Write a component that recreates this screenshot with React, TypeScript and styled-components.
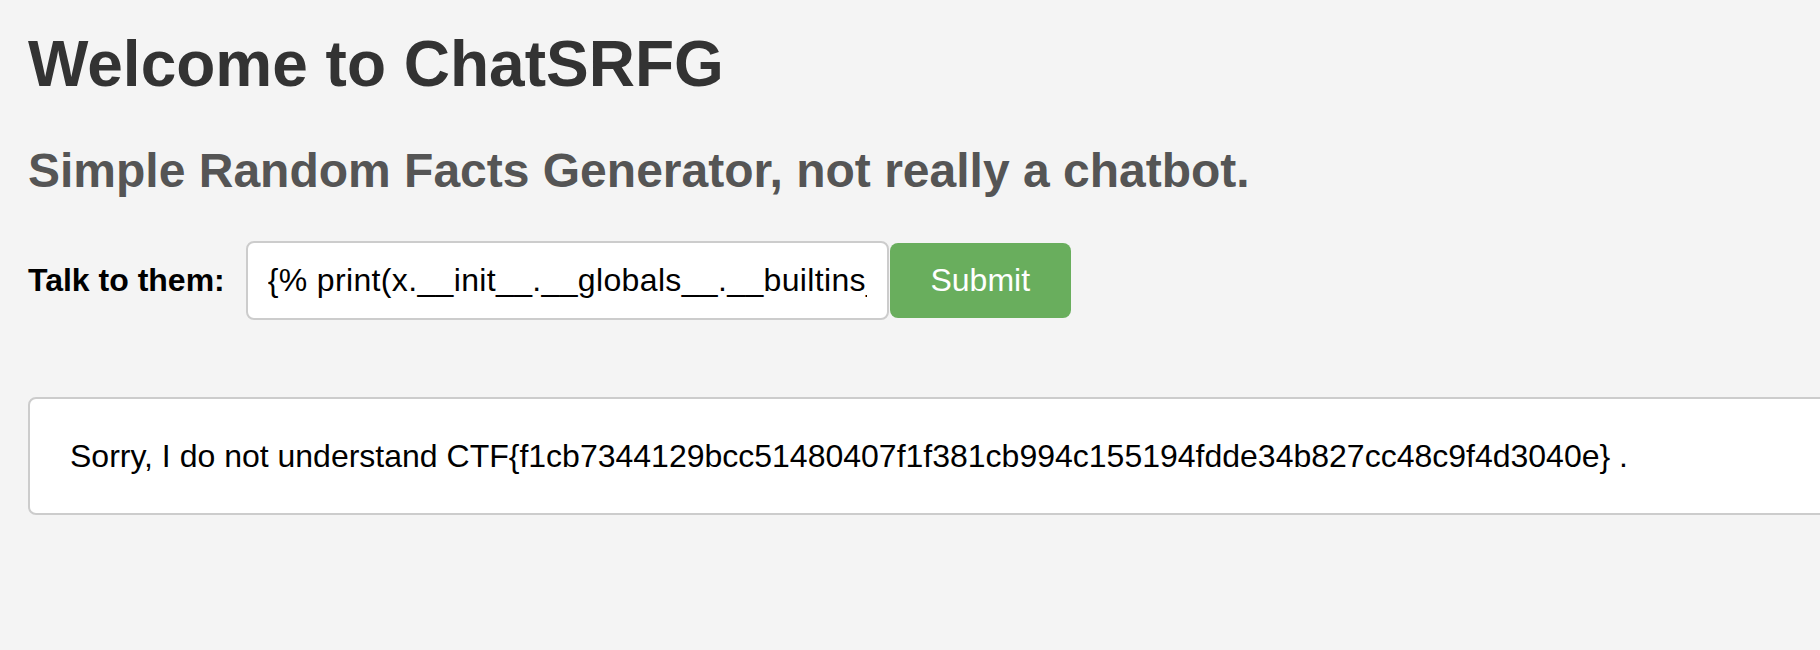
import React from "react";
import styled, { createGlobalStyle } from "styled-components";

const GlobalStyle = createGlobalStyle`
  html, body {
    margin: 0;
    padding: 0;
    background: #f4f4f4;
    overflow: hidden;
  }
  body {
    font-family: "Liberation Sans", Arial, Helvetica, sans-serif;
  }
`;

const Page = styled.main`
  padding: 27px 0 0 28px;
  box-sizing: border-box;
  width: 1820px;
  min-height: 650px;
  overflow: hidden;
  font-family: "Liberation Sans", Arial, Helvetica, sans-serif;
`;

const Title = styled.h1`
  margin: 0;
  font-size: 64px;
  font-weight: 700;
  line-height: 74px;
  color: #333333;
`;

const Subtitle = styled.h2`
  margin: 42px 0 0;
  font-size: 48px;
  font-weight: 700;
  line-height: 55px;
  color: #555555;
`;

const Form = styled.form`
  margin-top: 43px;
  display: flex;
  align-items: center;
  height: 79px;
`;

const Label = styled.label`
  margin-right: 21px;
  font-size: 32px;
  font-weight: 700;
  color: #000000;
`;

const Input = styled.input`
  box-sizing: border-box;
  width: 643px;
  height: 79px;
  padding: 0 20px;
  border: 2px solid #cccccc;
  border-radius: 8px;
  background: #ffffff;
  font-family: "Liberation Sans", Arial, Helvetica, sans-serif;
  font-size: 32px;
  letter-spacing: 0.35px;
  color: #000000;
  outline: none;
`;

const Button = styled.button`
  box-sizing: border-box;
  margin-left: 1px;
  width: 181px;
  height: 75px;
  padding: 0 40px;
  border: none;
  border-radius: 8px;
  background: #69ae5d;
  color: #ffffff;
  font-family: "Liberation Sans", Arial, Helvetica, sans-serif;
  font-size: 32px;
  cursor: pointer;
`;

const Response = styled.div`
  box-sizing: border-box;
  margin-top: 77px;
  width: 2000px;
  height: 118px;
  padding: 0 40px;
  display: flex;
  align-items: center;
  background: #ffffff;
  border: 2px solid #cccccc;
  border-radius: 8px;
  font-size: 32px;
  color: #000000;
  white-space: nowrap;
`;

export default function App() {
  return (
    <>
      <GlobalStyle />
      <Page>
        <Title>Welcome to ChatSRFG</Title>
        <Subtitle>Simple Random Facts Generator, not really a chatbot.</Subtitle>
        <Form onSubmit={(e) => e.preventDefault()}>
          <Label htmlFor="msg">Talk to them:</Label>
          <Input
            id="msg"
            type="text"
            defaultValue="{% print(x.__init__.__globals__.__builtins__.open('/flag').read()) %}"
          />
          <Button type="submit">Submit</Button>
        </Form>
        <Response>
          Sorry, I do not understand CTF&#123;f1cb7344129bcc51480407f1f381cb994c155194fdde34b827cc48c9f4d3040e&#125; .
        </Response>
      </Page>
    </>
  );
}
